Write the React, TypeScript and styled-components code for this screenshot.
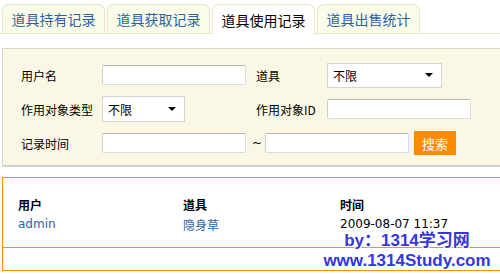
import styled, { createGlobalStyle } from "styled-components";

const GlobalStyle = createGlobalStyle`
  body {
    margin: 0;
    background: #fff;
    font-family: "DejaVu Sans", "Noto Sans CJK SC", sans-serif;
    font-size: 12px;
    color: #000;
  }
`;

const Page = styled.div`
  position: relative;
  width: 500px;
  height: 274px;
  overflow: hidden;
  padding-top: 4px;
  box-sizing: border-box;
`;

const TabBar = styled.div`
  display: flex;
  gap: 2px;
  padding-left: 2px;
  border-bottom: 1px solid #ebe4c6;
`;

const Tab = styled.div<{ $active?: boolean }>`
  padding: 0 8.5px;
  display: flex;
  align-items: center;
  border: 1px solid #ebe4c6;
  border-bottom: none;
  border-radius: 7px 7px 0 0;
  background: ${(p) => (p.$active ? "#fff" : "#f9fce6")};
  color: ${(p) => (p.$active ? "#000" : "#2b62a8")};
  font-family: "Noto Sans CJK SC", sans-serif;
  font-size: 14px;
  margin-bottom: ${(p) => (p.$active ? "-1px" : "0")};
  height: ${(p) => (p.$active ? "29px" : "28px")};
  cursor: pointer;
`;

const Filter = styled.div`
  margin: 14px 0 0 2px;
  width: 520px;
  background: #faf7e4;
  border: 1px solid #d6d6d0;
  border-bottom: 2px solid #cfcfcf;
  padding: 13px 0 9px 18px;
  display: flex;
  flex-direction: column;
  gap: 8px;
`;

const Row = styled.div`
  display: flex;
  align-items: center;
  height: 26px;
`;

const Label = styled.div<{ $w: number }>`
  width: ${(p) => p.$w}px;
  font-family: "Noto Sans CJK SC", sans-serif;
  font-size: 12px;
  white-space: nowrap;
`;

const Input = styled.div<{ $w?: number }>`
  width: ${(p) => p.$w ?? 144}px;
  height: 20px;
  box-sizing: border-box;
  background: #fff;
  border: 1px solid #dcdcdc;
  border-top-color: #b4b4b4;
  border-left-color: #cfcfcf;
  border-radius: 2px;
`;

const Field = styled.div<{ $w: number }>`
  width: ${(p) => p.$w}px;
  display: flex;
  align-items: center;
`;

const Select = styled.div<{ $w: number; $h?: number }>`
  width: ${(p) => p.$w}px;
  height: ${(p) => p.$h ?? 25}px;
  box-sizing: border-box;
  background: #fff;
  border: 1px solid #d4d4d4;
  display: flex;
  align-items: center;
  justify-content: space-between;
  padding: 0 8px 0 5px;
  font-family: "Noto Sans CJK SC", sans-serif;
  font-size: 12px;
`;

const Caret = styled.span`
  width: 0;
  height: 0;
  border-left: 4px solid transparent;
  border-right: 4px solid transparent;
  border-top: 4px solid #000;
`;

const Tilde = styled.span`
  width: 19px;
  padding-left: 6px;
  box-sizing: border-box;
  font-size: 12px;
`;

const SearchButton = styled.button`
  margin-left: 5px;
  width: 42px;
  height: 24px;
  border: none;
  background: #ff8a00;
  color: #fff;
  font-family: "Noto Sans CJK SC", sans-serif;
  font-size: 13px;
  padding: 0;
  cursor: pointer;
`;

const Results = styled.div`
  margin: 10px 0 0 2px;
  width: 520px;
  border: 1px solid #f5901a;
`;

const ResultBody = styled.div`
  padding: 16px 0 13px 15px;
  border-bottom: 1px solid #f5901a;
`;

const ResultRow = styled.div`
  display: grid;
  grid-template-columns: 165px 157px 1fr;
  height: 20px;
  align-items: center;
`;

const Head = styled.div`
  font-family: "Noto Sans CJK SC", sans-serif;
  font-weight: bold;
  font-size: 12px;
`;

const Link = styled.a<{ $cjk?: boolean }>`
  color: #2d62a6;
  text-decoration: none;
  font-size: 12px;
  font-family: ${(p) =>
    p.$cjk ? '"Noto Sans CJK SC", sans-serif' : "inherit"};
`;

const Cell = styled.div`
  font-size: 12px;
`;

const Footer = styled.div`
  height: 22px;
`;

const Watermark = styled.div`
  position: absolute;
  left: 318px;
  top: 231px;
  width: 178px;
  text-align: center;
  font-family: "Liberation Sans", "Noto Sans CJK SC", sans-serif;
  font-weight: bold;
  font-size: 17px;
  line-height: 20px;
  color: #3737d8;
  text-shadow: 1px 1px 0 #fff, -1px -1px 0 #fff, 1px -1px 0 #fff,
    -1px 1px 0 #fff;
`;

const tabs = ["道具持有记录", "道具获取记录", "道具使用记录", "道具出售统计"];

export default function App() {
  return (
    <Page>
      <GlobalStyle />
      <TabBar>
        {tabs.map((t, i) => (
          <Tab key={t} $active={i === 2}>
            {t}
          </Tab>
        ))}
      </TabBar>

      <Filter>
        <Row>
          <Label $w={81}>用户名</Label>
          <Field $w={154}>
            <Input />
          </Field>
          <Label $w={71}>道具</Label>
          <Select $w={115}>
            不限
            <Caret />
          </Select>
        </Row>
        <Row>
          <Label $w={81}>作用对象类型</Label>
          <Field $w={154}>
            <Select $w={83} $h={26}>
              不限
              <Caret />
            </Select>
          </Field>
          <Label $w={71}>作用对象ID</Label>
          <Input />
        </Row>
        <Row>
          <Label $w={81}>记录时间</Label>
          <Input />
          <Tilde>~</Tilde>
          <Input />
          <SearchButton>搜索</SearchButton>
        </Row>
      </Filter>

      <Results>
        <ResultBody>
          <ResultRow>
            <Head>用户</Head>
            <Head>道具</Head>
            <Head>时间</Head>
          </ResultRow>
          <ResultRow>
            <Link href="#">admin</Link>
            <Link href="#" $cjk>
              隐身草
            </Link>
            <Cell>2009-08-07 11:37</Cell>
          </ResultRow>
        </ResultBody>
        <Footer />
      </Results>

      <Watermark>
        by：1314学习网
        <br />
        www.1314Study.com
      </Watermark>
    </Page>
  );
}
